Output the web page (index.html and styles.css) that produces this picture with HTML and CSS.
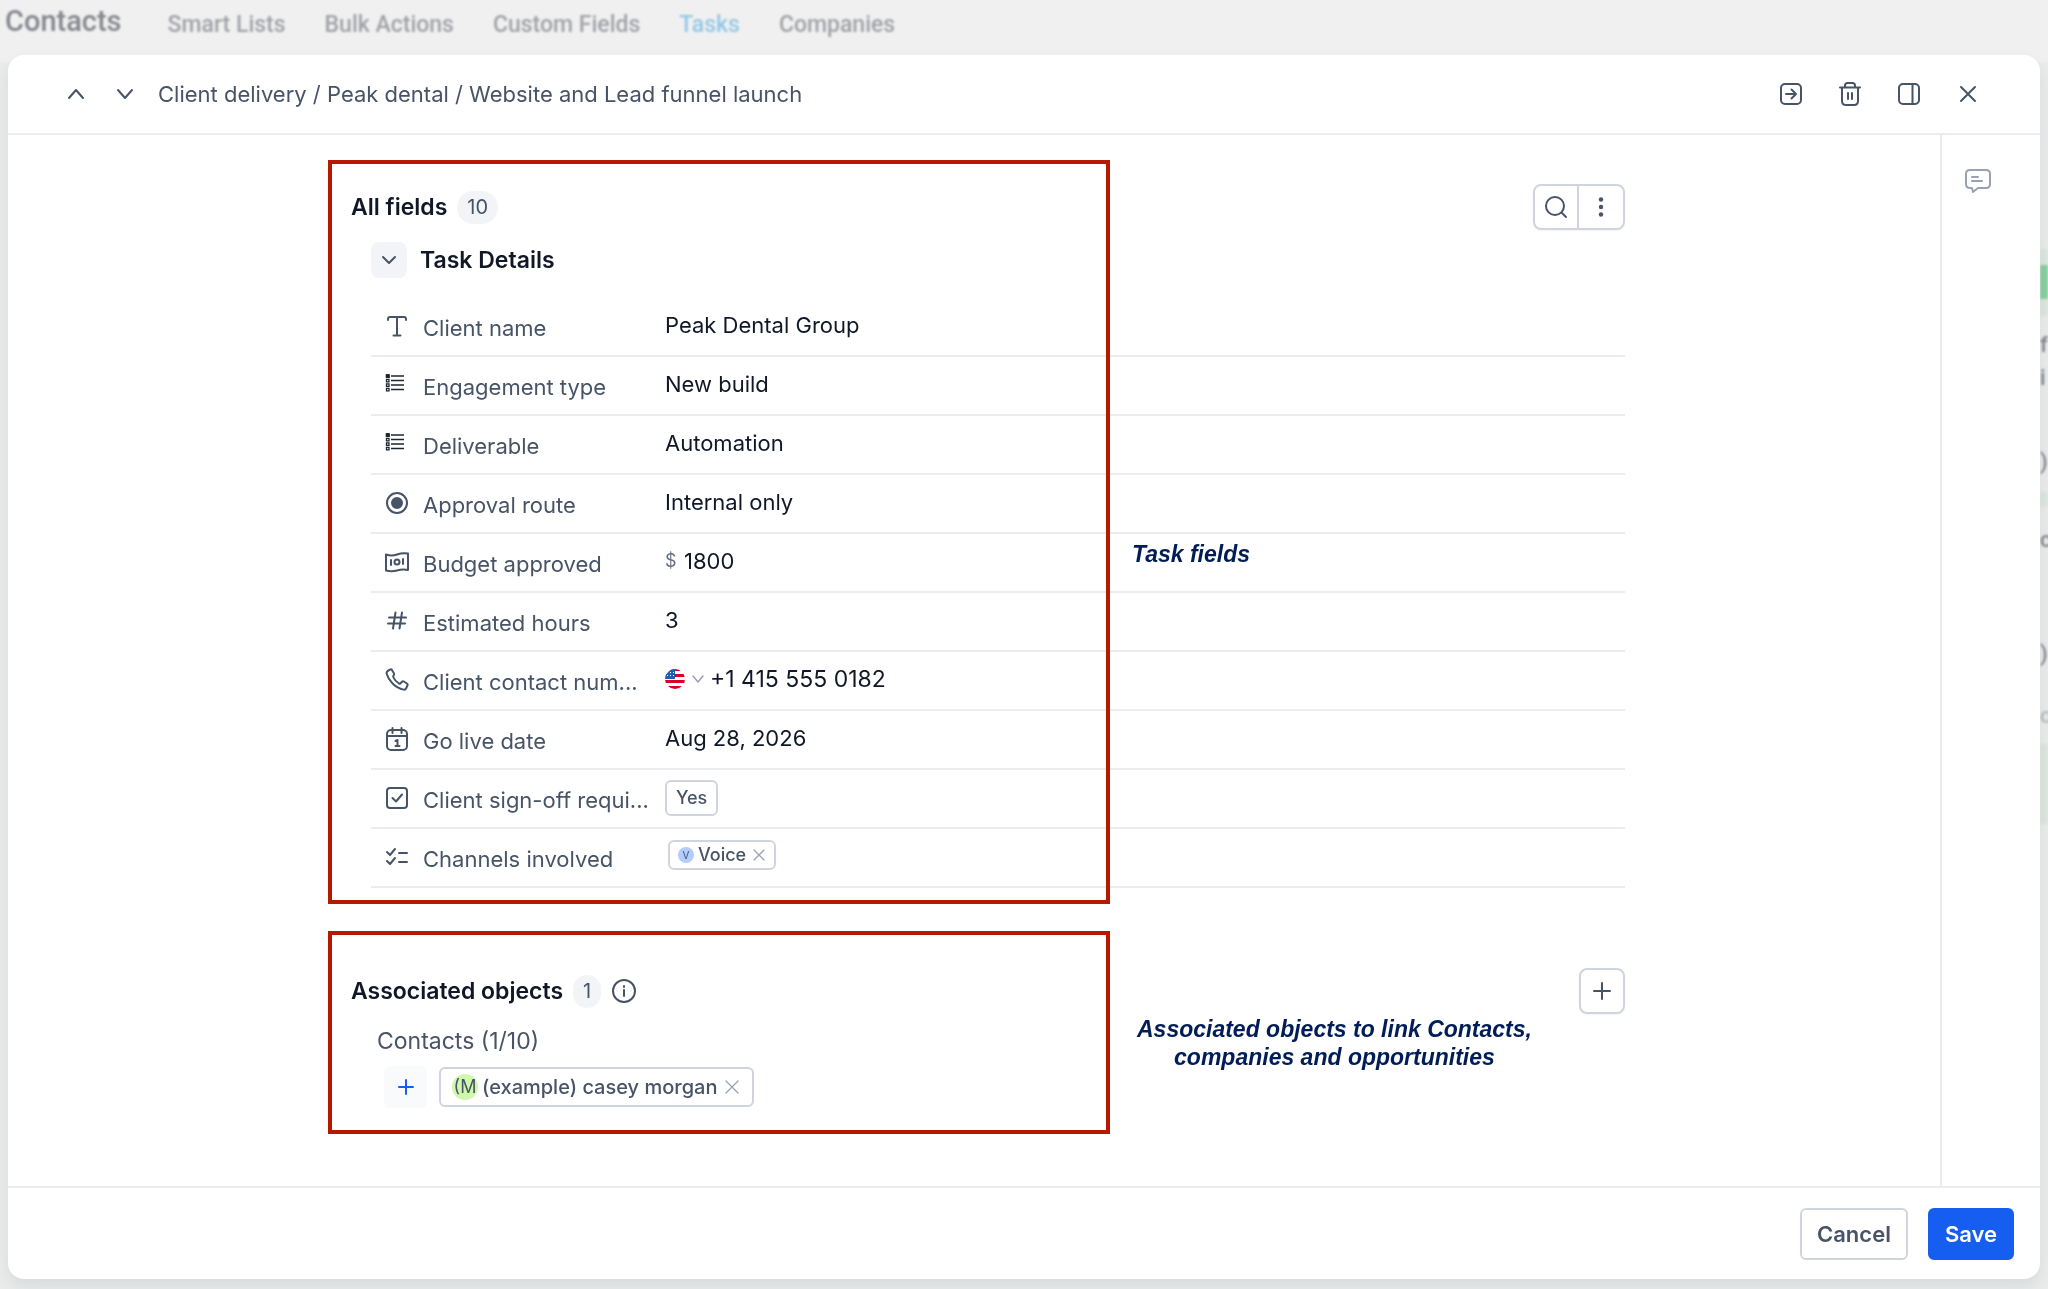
FILE: index.html
```html
<!DOCTYPE html>
<html lang="en">
<head>
    <meta charset="UTF-8">
    <meta name="viewport" content="width=device-width, initial-scale=1.0">
    <title>Tasks</title>
    <link rel="stylesheet" href="styles.css">
</head>
<body>
    <!-- Page behind the modal -->
    <div class="page">
        <nav class="topbar">
            <span class="topbar-title">Contacts</span>
            <a class="topbar-link" href="#">Smart Lists</a>
            <a class="topbar-link" href="#">Bulk Actions</a>
            <a class="topbar-link" href="#">Custom Fields</a>
            <a class="topbar-link active" href="#">Tasks</a>
            <a class="topbar-link" href="#">Companies</a>
        </nav>
        <div class="board">
            <div class="board-column">
                <div class="board-head"><div class="board-pill"></div></div>
                <div class="board-text">f</div>
                <div class="board-text">i</div>
                <div class="board-text gap">)</div>
                <div class="board-tag"></div>
                <div class="board-text">c</div>
                <div class="board-text far">)</div>
                <div class="board-text faint">o</div>
                <div class="board-block"></div>
            </div>
        </div>
    </div>

    <div class="modal" role="dialog" aria-labelledby="modalTitle">
        <header class="modal-header">
            <button class="icon-btn" type="button" aria-label="Previous">
                <svg width="24" height="24" viewBox="0 0 24 24"><path d="M5 16l7-8 7 8"/></svg>
            </button>
            <button class="icon-btn" type="button" aria-label="Next">
                <svg width="24" height="24" viewBox="0 0 24 24"><path d="M5 8l7 8 7-8"/></svg>
            </button>
            <h1 class="modal-title" id="modalTitle">Client delivery / Peak dental / Website and Lead funnel launch</h1>
            <div class="header-actions">
                <button class="icon-btn" type="button" aria-label="Move">
                    <svg width="26" height="26" viewBox="0 0 26 26"><rect x="3" y="3" width="20" height="20" rx="4"/><path d="M8 13h10M13.500 8.500l4.500 4.500-4.500 4.500"/></svg>
                </button>
                <button class="icon-btn" type="button" aria-label="Delete">
                    <svg width="26" height="26" viewBox="0 0 26 26"><path d="M3 6.500h20M8 6V4.500Q8 2 10.500 2h5Q18 2 18 4.500V6M5 6.500v13.500q0 4 4 4h8q4 0 4-4V6.500M11 12v6M15 12v6"/></svg>
                </button>
                <button class="icon-btn" type="button" aria-label="Side panel">
                    <svg width="26" height="26" viewBox="0 0 26 26"><rect x="3" y="3" width="20" height="20" rx="4"/><path d="M16.500 3v20"/></svg>
                </button>
                <button class="icon-btn" type="button" aria-label="Close">
                    <svg width="26" height="26" viewBox="0 0 26 26"><path d="M6 6l14 14M20 6L6 20"/></svg>
                </button>
            </div>
        </header>

        <div class="modal-body">
            <main class="content">
                <section class="section fields">
                    <div class="highlight"></div>
                    <div class="section-head">
                        <h2 class="section-title">All fields</h2>
                        <span class="count">10</span>
                        <div class="btn-group">
                            <button class="square-btn" type="button" aria-label="Search">
                                <svg width="28" height="28" viewBox="0 0 28 28"><circle cx="13" cy="13" r="9"/><path d="M20 20l4 4"/></svg>
                            </button>
                            <button class="square-btn" type="button" aria-label="More">
                                <svg width="28" height="28" viewBox="0 0 28 28"><g fill="currentColor" stroke="none"><circle cx="14" cy="6.500" r="2.200"/><circle cx="14" cy="14" r="2.200"/><circle cx="14" cy="21.500" r="2.200"/></g></svg>
                            </button>
                        </div>
                    </div>

                    <div class="group-head">
                        <button class="toggle-btn" type="button" aria-label="Collapse">
                            <svg width="20" height="20" viewBox="0 0 20 20"><path d="M4 7l6 6 6-6"/></svg>
                        </button>
                        <h3 class="section-title">Task Details</h3>
                    </div>

                    <div class="rows">
                        <div class="row">
                            <svg class="row-icon" width="26" height="26" viewBox="0 0 26 26"><path d="M4 6V5Q4 3 6 3h14Q22 3 22 5v1M13 3v18.500M9.500 21.500h7"/></svg>
                            <label class="row-label" for="clientName">Client name</label>
                            <div class="row-value"><input class="field-input" id="clientName" type="text" value="Peak Dental Group"></div>
                        </div>
                        <div class="row">
                            <svg class="row-icon list-icon" width="26" height="26" viewBox="0 0 26 26"><path d="M7 3h13M7 7.500h13M7 12h13M7 16.500h13"/><path d="M2.500 1.800h2.500v2.500H2.500zM2.500 6.300h2.500v2.500H2.500zM2.500 10.800h2.500v2.500H2.500zM2.500 15.300h2.500v2.500H2.500z"/><path class="bullet-on" d="M2.500 1.800h2.500v2.500H2.500z"/></svg>
                            <label class="row-label" for="engagement">Engagement type</label>
                            <div class="row-value">
                                <select class="field-input" id="engagement"><option>New build</option></select>
                            </div>
                        </div>
                        <div class="row">
                            <svg class="row-icon list-icon" width="26" height="26" viewBox="0 0 26 26"><path d="M7 3h13M7 7.500h13M7 12h13M7 16.500h13"/><path d="M2.500 1.800h2.500v2.500H2.500zM2.500 6.300h2.500v2.500H2.500zM2.500 10.800h2.500v2.500H2.500zM2.500 15.300h2.500v2.500H2.500z"/><path class="bullet-on" d="M2.500 1.800h2.500v2.500H2.500z"/></svg>
                            <label class="row-label" for="deliverable">Deliverable</label>
                            <div class="row-value">
                                <select class="field-input" id="deliverable"><option>Automation</option></select>
                            </div>
                        </div>
                        <div class="row">
                            <svg class="row-icon" width="26" height="26" viewBox="0 0 26 26"><circle cx="13" cy="12" r="10"/><circle cx="13" cy="12" r="5" fill="currentColor"/></svg>
                            <label class="row-label" for="approval">Approval route</label>
                            <div class="row-value">
                                <select class="field-input" id="approval"><option>Internal only</option></select>
                            </div>
                        </div>
                        <div class="row">
                            <svg class="row-icon" width="26" height="26" viewBox="0 0 26 26"><path d="M2 4.500q5.500 2 11 0t11-1V20q-5.500-1-11 .5t-11 0zM7 10v5M19 9v5"/><circle cx="13" cy="12" r="2.500"/></svg>
                            <label class="row-label" for="budget">Budget approved</label>
                            <div class="row-value">
                                <span class="currency">$</span>
                                <input class="field-input" id="budget" type="text" value="1800">
                            </div>
                        </div>
                        <div class="row">
                            <svg class="row-icon" width="26" height="26" viewBox="0 0 26 26"><path d="M5 8.500h17M4 14.500h17M11.500 3.500L9 19.500M18 3.500l-2.500 16"/></svg>
                            <label class="row-label" for="hours">Estimated hours</label>
                            <div class="row-value"><input class="field-input" id="hours" type="text" value="3"></div>
                        </div>
                        <div class="row">
                            <svg class="row-icon" width="26" height="26" viewBox="0 0 26 26"><path d="M9.500 9.500c1 2.500 3 4.500 5.500 6 .8.400 1.200.2 1.800-.5l1.200-1.300c.6-.6 1.200-.6 1.900-.2l3 2c.8.600.9 1.300.5 2l-1.100 2.500c-.5 1.200-1.500 1.900-2.800 1.600C11 19.800 4.500 12.500 2.700 5.700c-.4-1.500.4-2.500 1.700-3.200L6 1.600c.9-.4 1.600-.2 2.100.6l1.800 3c.4.700.3 1.400-.2 2-.7.800-.6 1.300-.2 2.300z"/></svg>
                            <label class="row-label" for="phone">Client contact num...</label>
                            <div class="row-value">
                                <button class="country-btn" type="button" aria-label="Country">
                                    <svg width="20" height="20" viewBox="0 0 20 20">
                                        <clipPath id="flagClip"><circle cx="10" cy="10" r="10"/></clipPath>
                                        <g clip-path="url(#flagClip)" stroke="none">
                                            <path fill="#fff" d="M0 0h20v20H0z"/>
                                            <path fill="#d80027" d="M0 0h20v2H0zM0 5h20v3H0zM0 11h20v3H0zM0 17h20v3H0z"/>
                                            <path fill="#1c5fb8" d="M0 0h10v10H0z"/>
                                            <path fill="#fff" d="M2 3h1v1H2zM5 3h1v1H5zM8 3h1v1H8zM2 6h1v1H2zM5 6h1v1H5zM8 6h1v1H8z"/>
                                        </g>
                                    </svg>
                                    <svg class="muted" width="14" height="14" viewBox="0 0 14 14"><path d="M2 4l5 6 5-6"/></svg>
                                </button>
                                <input class="field-input phone-input" id="phone" type="tel" value="+1 415 555 0182">
                            </div>
                        </div>
                        <div class="row">
                            <svg class="row-icon" width="26" height="26" viewBox="0 0 26 26"><rect x="3" y="3" width="20" height="20" rx="4"/><path d="M3 9h20M8.500 1v5M17.500 1v5M11.500 14l2-1V19M11.500 19h4"/></svg>
                            <label class="row-label" for="goLive">Go live date</label>
                            <div class="row-value"><input class="field-input" id="goLive" type="text" value="Aug 28, 2026"></div>
                        </div>
                        <div class="row">
                            <svg class="row-icon" width="26" height="26" viewBox="0 0 26 26"><rect x="3" y="2" width="20" height="20" rx="3"/><path d="M8.500 12l3.500 3.500L18 8.500"/></svg>
                            <label class="row-label" for="signOff">Client sign-off requi...</label>
                            <div class="row-value chip-value"><button class="yes-btn" id="signOff" type="button">Yes</button></div>
                        </div>
                        <div class="row">
                            <svg class="row-icon" width="26" height="26" viewBox="0 0 26 26"><path d="M3 7l3 3 5-6M3 16l3 3 5-6M15 8h8M15 17h8"/></svg>
                            <span class="row-label">Channels involved</span>
                            <div class="row-value tag-value">
                                <span class="tag">
                                    <span class="tag-avatar">V</span>
                                    Voice
                                    <button class="remove-btn" type="button" aria-label="Remove Voice">
                                        <svg width="14" height="14" viewBox="0 0 14 14"><path d="M2 2l10 10M12 2L2 12"/></svg>
                                    </button>
                                </span>
                            </div>
                        </div>
                    </div>
                    <p class="note note-fields">Task fields</p>
                </section>

                <section class="section objects">
                    <div class="highlight"></div>
                    <div class="section-head">
                        <h2 class="section-title">Associated objects</h2>
                        <span class="count">1</span>
                        <svg class="info-icon" width="26" height="26" viewBox="0 0 26 26"><circle cx="13" cy="13" r="11"/><path d="M13 12v6M13 8v1"/></svg>
                        <div class="btn-group">
                            <button class="square-btn" type="button" aria-label="Add object">
                                <svg width="28" height="28" viewBox="0 0 28 28"><path d="M14 6v16M6 14h16"/></svg>
                            </button>
                        </div>
                    </div>
                    <h3 class="object-type">Contacts (1/10)</h3>
                    <div class="object-list">
                        <button class="add-btn" type="button" aria-label="Add contact">
                            <svg width="20" height="20" viewBox="0 0 20 20"><path d="M10 3v14M3 10h14"/></svg>
                        </button>
                        <span class="contact-chip">
                            <span class="contact-avatar">(M</span>
                            (example) casey morgan
                            <button class="remove-btn" type="button" aria-label="Remove contact">
                                <svg width="18" height="18" viewBox="0 0 18 18"><path d="M3 3l12 12M15 3L3 15"/></svg>
                            </button>
                        </span>
                    </div>
                    <p class="note note-objects">Associated objects to link Contacts,<br>companies and opportunities</p>
                </section>
            </main>

            <aside class="rail">
                <button class="icon-btn" type="button" aria-label="Comments">
                    <svg width="28" height="28" viewBox="0 0 28 28"><path d="M6 3h16q4 0 4 4v10q0 4-4 4h-8l-5 4-1-4H6q-4 0-4-4V7q0-4 4-4zM8 10h6M8 14h10"/></svg>
                </button>
            </aside>
        </div>

        <footer class="modal-footer">
            <button class="btn" type="button">Cancel</button>
            <button class="btn btn-primary" type="button">Save</button>
        </footer>
    </div>
</body>
</html>
```
FILE: styles.css
```css
* {
    margin: 0;
    padding: 0;
    box-sizing: border-box;
}

body {
    font-family: Inter, 'Liberation Sans', sans-serif;
    font-size: 22px;
    color: #101828;
    background: #eaecec;
    overflow: hidden;
}

button,
input,
select {
    font: inherit;
    color: inherit;
    background: none;
    border: none;
    outline: none;
}

button {
    cursor: pointer;
}

svg {
    display: block;
    flex-shrink: 0;
    fill: none;
    stroke: currentColor;
    stroke-width: 2;
    stroke-linecap: round;
    stroke-linejoin: round;
}

/* Page behind the modal */
.page {
    height: 100vh;
    overflow: hidden;
    font-family: Roboto, sans-serif;
}

.topbar {
    display: flex;
    align-items: center;
    gap: 39px;
    height: 62px;
    padding: 0 5px 14px;
    background: #f0f0f0;
    filter: blur(1px);
}

.topbar-title {
    margin: 0 7px 7px 0;
    font-size: 29px;
    font-weight: 500;
    color: #85878d;
}

.topbar-link {
    font-size: 23px;
    font-weight: 500;
    color: #a0a2a7;
    text-decoration: none;
}

.topbar-link.active {
    color: #93c7e6;
}

.board {
    display: flex;
    justify-content: flex-end;
    padding-top: 187px;
    filter: blur(1px);
}

.board-column {
    width: 8px;
}

.board-head {
    height: 67px;
    padding: 16px 0;
    background: #dce7e0;
}

.board-pill {
    height: 34px;
    background: #8ad0a0;
}

.board-text {
    height: 33px;
    font-size: 22px;
    line-height: 33px;
    font-weight: 500;
    color: #85878d;
}

.board-head + .board-text {
    margin-top: 12px;
}

.board-text.gap {
    margin: 51px 0 14px;
}

.board-tag {
    height: 15px;
    margin-bottom: 16px;
    background: #dce7e0;
}

.board-text.far {
    margin: 81px 0 29px;
}

.board-text.faint {
    color: #b9bbc0;
}

.board-block {
    height: 80px;
    margin-top: 12px;
    background: #dce7e0;
}

/* Modal */
.modal {
    position: fixed;
    inset: 55px 8px 10px;
    display: flex;
    flex-direction: column;
    background: #ffffff;
    border-radius: 16px;
    box-shadow: 0 8px 16px rgba(16, 24, 40, 0.08);
    overflow: hidden;
}

.modal-header {
    display: flex;
    align-items: center;
    gap: 25px;
    height: 80px;
    padding: 0 59px 0 56px;
    border-bottom: 2px solid #eaecf0;
    color: #475467;
}

.modal-title {
    margin-left: -4px;
    font-size: 22px;
    font-weight: 400;
}

.icon-btn {
    color: inherit;
}

.header-actions {
    display: flex;
    gap: 33px;
    margin-left: auto;
}

.modal-body {
    display: flex;
    flex: 1;
    min-height: 0;
}

.content {
    flex: 1;
    padding: 25px 315px 0 320px;
}

.rail {
    width: 100px;
    padding: 32px 0 0 22px;
    border-left: 2px solid #eaecf0;
    color: #98a2b3;
}

/* Sections */
.section {
    position: relative;
    padding-left: 23px;
}

.fields {
    padding-top: 24px;
    padding-bottom: 16px;
    margin-bottom: 27px;
}

.objects {
    padding-top: 37px;
    padding-bottom: 26px;
}

.highlight {
    position: absolute;
    inset: 0 auto 0 0;
    width: 782px;
    border: 4px solid #b51a00;
    pointer-events: none;
}

.section-head {
    display: flex;
    align-items: center;
    height: 46px;
}

.section-title {
    font-size: 23px;
    font-weight: 600;
    line-height: 28px;
}

.count {
    margin-left: 10px;
    padding: 0 10px;
    border-radius: 17px;
    background: #f2f4f7;
    color: #475467;
    font-size: 20px;
    line-height: 33px;
}

.info-icon {
    margin-left: 10px;
    color: #475467;
}

.btn-group {
    display: flex;
    margin-left: auto;
    border: 2px solid #d0d5dd;
    border-radius: 8px;
    box-shadow: 0 1px 2px rgba(16, 24, 40, 0.05);
}

.square-btn {
    display: flex;
    align-items: center;
    justify-content: center;
    width: 42px;
    height: 42px;
    color: #475467;
}

.square-btn + .square-btn {
    width: 46px;
    border-left: 2px solid #d0d5dd;
}

.group-head {
    display: flex;
    align-items: center;
    gap: 13px;
    margin: 12px 0 20px 20px;
}

.toggle-btn {
    padding: 8px;
    border-radius: 8px;
    background: #f2f4f7;
    color: #475467;
}

/* Field rows */
.rows {
    margin-left: 20px;
}

.row {
    display: flex;
    align-items: center;
    height: 59px;
    padding-left: 13px;
    border-bottom: 2px solid #eaecf0;
}

.row-icon {
    margin-right: 13px;
    color: #475467;
}

.list-icon {
    color: #1d2630;
    stroke-width: 1.3;
    stroke-linecap: butt;
    stroke-linejoin: miter;
}

.list-icon .bullet-on {
    fill: currentColor;
}

.row-label {
    width: 242px;
    padding-top: 2px;
    color: #475467;
    white-space: nowrap;
}

.row-value {
    display: flex;
    flex: 1;
    align-items: center;
    padding-bottom: 4px;
}

.field-input {
    flex: 1;
    height: 32px;
    appearance: none;
}

.phone-input {
    font-size: 23px;
}

.currency {
    width: 19px;
    font-size: 18px;
    color: #667085;
}

.country-btn {
    display: flex;
    align-items: center;
    gap: 6px;
    width: 45px;
}

.muted {
    color: #98a2b3;
    stroke-width: 1.5;
}

.chip-value {
    padding-bottom: 2px;
}

.yes-btn {
    height: 36px;
    padding: 0 9px;
    border: 2px solid #d0d5dd;
    border-radius: 6px;
    color: #475467;
    font-size: 18px;
    font-weight: 500;
}

.tag-value {
    padding-left: 3px;
    padding-bottom: 6px;
}

.tag {
    display: flex;
    align-items: center;
    height: 30px;
    padding: 0 8px;
    border: 2px solid #d0d5dd;
    border-radius: 6px;
    color: #475467;
    font-size: 18px;
    font-weight: 500;
}

.tag-avatar {
    width: 16px;
    margin-right: 4px;
    border-radius: 50%;
    background: #b2ccff;
    font-size: 10px;
    font-weight: 400;
    line-height: 16px;
    text-align: center;
}

.remove-btn {
    margin-left: 6px;
    color: #98a2b3;
}

.remove-btn svg {
    stroke-width: 1.3;
}

/* Associated objects */
.object-type {
    margin: 13px 0 11px 26px;
    color: #475467;
    font-size: 23px;
    font-weight: 400;
    line-height: 28px;
}

.object-list {
    display: flex;
    align-items: center;
    gap: 12px;
    margin-left: 33px;
}

.add-btn {
    display: flex;
    align-items: center;
    justify-content: center;
    width: 43px;
    height: 42px;
    border-radius: 6px;
    background: #f9fafb;
    color: #155eef;
}

.contact-chip {
    display: flex;
    align-items: center;
    height: 40px;
    padding: 0 11px;
    border: 2px solid #d0d5dd;
    border-radius: 6px;
    color: #475467;
    font-size: 20px;
    font-weight: 500;
}

.contact-avatar {
    width: 26px;
    margin-right: 4px;
    border-radius: 50%;
    background: #d0f8ab;
    font-size: 18px;
    font-weight: 400;
    line-height: 26px;
    text-align: center;
}

/* Notes beside the highlighted areas */
.note {
    position: absolute;
    color: #011d57;
    font-family: 'Liberation Sans', Arial, sans-serif;
    font-size: 23px;
    font-style: italic;
    font-weight: 700;
    line-height: 28px;
    text-align: center;
}

.note-fields {
    top: 380px;
    left: 804px;
}

.note-objects {
    top: 84px;
    left: 809px;
}

.modal-footer {
    display: flex;
    align-items: center;
    justify-content: flex-end;
    gap: 20px;
    height: 93px;
    padding-right: 26px;
    border-top: 2px solid #eaecf0;
}

.btn {
    height: 52px;
    padding: 0 15px;
    border: 2px solid #d0d5dd;
    border-radius: 6px;
    color: #475467;
    font-weight: 600;
}

.btn-primary {
    border-color: #155eef;
    background: #155eef;
    color: #ffffff;
}
```
